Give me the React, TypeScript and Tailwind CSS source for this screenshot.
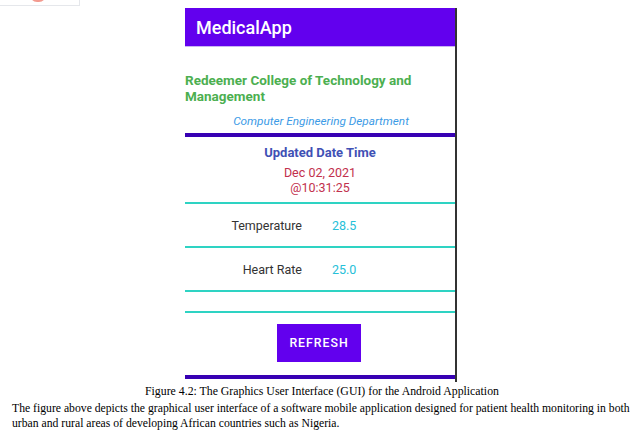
import React from "react";

const readings = [
  { label: "Temperature", value: "28.5" },
  { label: "Heart Rate", value: "25.0" },
];

const App: React.FC = () => {
  return (
    <div className="w-[642px] h-[447px] bg-white overflow-hidden relative">
      {/* Leftover of the figure above */}
      <div className="h-[8px]">
        <div className="w-[80px] h-[6px] border-r border-b border-gray-200 relative overflow-hidden">
          <div className="absolute left-[30px] top-[-12px] w-[16px] h-[14px] rounded-full bg-[#f39a8f]" />
        </div>
      </div>

      {/* Phone screen */}
      <div
        className="ml-[185px] w-[272px] h-[374px] border-r-2 border-[#333] flex flex-col"
        style={{ fontFamily: "Roboto, 'Liberation Sans', sans-serif" }}
      >
        <div className="h-[39px] bg-[#6200ee] flex items-center pl-[11px] text-white text-[18px] font-medium border-b border-[#c9b4f2]">
          MedicalApp
        </div>

        <div className="pt-[25px] text-[13.5px] font-bold text-[#4caf50] leading-[16px]">
          Redeemer College of Technology and
          <br />
          Management
        </div>
        <div className="mt-[9px] text-center text-[11.75px] italic text-[#3c9be6] leading-[16px] pl-[2px]">
          Computer Engineering Department
        </div>

        <div className="mt-[4px] h-[4px] bg-[#3700b3]" />

        <div className="mt-[8px] text-center text-[13px] font-bold text-[#3f51b5] leading-[16px]">
          Updated Date Time
        </div>
        <div className="mt-[4px] text-center text-[12.5px] text-[#c2304d] leading-[15px]">
          Dec 02, 2021
          <br />
          @10:31:25
        </div>

        <div className="mt-[7px] h-[2px] bg-[#2ed3c3]" />
        {readings.map((r) => (
          <React.Fragment key={r.label}>
            <div className="h-[42px] pt-[3px] grid grid-cols-[117px_1fr] items-center text-[12.5px]">
              <span className="text-right text-[#333]">{r.label}</span>
              <span className="pl-[30px] text-[#26c0d8]">{r.value}</span>
            </div>
            <div className="h-[2px] bg-[#2ed3c3]" />
          </React.Fragment>
        ))}
        <div className="mt-[19px] h-[2px] bg-[#2ed3c3]" />

        <div className="mt-[11px] flex justify-center pr-[2px]">
          <button className="w-[84px] h-[38px] bg-[#6200ee] text-white text-[12.3px] font-medium tracking-[0.08em]">
            REFRESH
          </button>
        </div>

        <div className="mt-[13px] h-[4px] bg-[#3700b3]" />
      </div>

      {/* Caption and body text */}
      <div style={{ fontFamily: "'Liberation Serif', 'Times New Roman', serif" }} className="text-black">
        <div className="mt-[2px] text-center text-[11.8px] leading-[14px] pl-[2px]">
          Figure 4.2: The Graphics User Interface (GUI) for the Android Application
        </div>
        <p className="mt-[4px] pl-[12px] text-[11.7px] leading-[14.5px] whitespace-nowrap">
          The figure above depicts the graphical user interface of a software mobile application designed for patient
          health monitoring in both
          <br />
          urban and rural areas of developing African countries such as Nigeria.
        </p>
      </div>
    </div>
  );
};

export default App;
